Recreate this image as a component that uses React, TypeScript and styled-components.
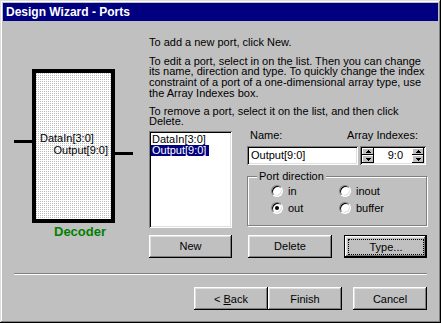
import React from "react";
import styled, { createGlobalStyle, css } from "styled-components";

const GlobalStyle = createGlobalStyle`
  html, body {
    margin: 0;
    padding: 0;
    background: #c0c0c0;
  }
  body {
    font-family: "Liberation Sans", Arial, sans-serif;
    font-size: 11px;
    color: #000;
  }
`;

const raised = css`
  box-shadow: inset -1px -1px #000, inset 1px 1px #fff, inset -2px -2px #808080,
    inset 2px 2px #dfdfdf;
`;

const sunken = css`
  box-shadow: inset 1px 1px #808080, inset -1px -1px #fff, inset 2px 2px #000,
    inset -2px -2px #dfdfdf;
`;

const Window = styled.div`
  width: 441px;
  height: 323px;
  box-sizing: border-box;
  padding: 3px;
  background: #c0c0c0;
  box-shadow: inset -1px -1px #000, inset 1px 1px #dfdfdf, inset -2px -2px #808080,
    inset 2px 2px #fff;
  display: flex;
  flex-direction: column;
`;

const TitleBar = styled.div`
  height: 18px;
  flex-shrink: 0;
  background: #000080;
  color: #fff;
  font-weight: bold;
  font-size: 12px;
  display: flex;
  align-items: center;
  padding-left: 3px;
`;

const Main = styled.div`
  flex: 1;
  display: flex;
  padding: 16px 0 0 11px;
`;

const LeftPanel = styled.div`
  width: 135px;
  padding-top: 32px;
  display: flex;
  flex-direction: column;
`;

const Diagram = styled.div`
  display: flex;
  align-items: flex-start;
`;

const Pin = styled.div<{ $top: number }>`
  width: 18px;
  height: 3px;
  background: #000;
  margin-top: ${(p) => p.$top}px;
`;

// stippled fill: one grey dot in every 2x2 tile
const Block = styled.div`
  width: 83px;
  height: 154px;
  box-sizing: border-box;
  border: 4px solid #000;
  padding: 59px 3px 0 4px;
  line-height: 12px;
  background-color: #fff;
  background-image: linear-gradient(90deg, transparent 1px, #fff 1px),
    linear-gradient(#bcbcbc 1px, transparent 1px);
  background-size: 2px 2px;
  display: flex;
  flex-direction: column;
`;

const PortName = styled.span<{ $right?: boolean }>`
  white-space: nowrap;
  align-self: ${(p) => (p.$right ? "flex-end" : "flex-start")};
`;

const BlockTitle = styled.div`
  margin: 1px 0 0 40px;
  font-size: 13px;
  line-height: 15px;
  font-weight: bold;
  color: #008000;
`;

const RightPanel = styled.div`
  width: 278px;
  display: flex;
  flex-direction: column;
`;

const Para = styled.p<{ $gap?: number }>`
  margin: ${(p) => p.$gap ?? 0}px 0 0;
  line-height: 10.7px;
  white-space: nowrap;
`;

const Editor = styled.div`
  margin-top: 4px;
  display: grid;
  grid-template-columns: 83px 180px;
  column-gap: 15px;
  row-gap: 7px;
`;

const ListBox = styled.div`
  height: 97px;
  box-sizing: border-box;
  padding: 3px 2px 2px;
  background: #fff;
  ${sunken};
  display: flex;
  flex-direction: column;
  align-items: flex-start;
`;

const ListItem = styled.div<{ $selected?: boolean }>`
  line-height: 11px;
  padding: 0 3px 0 1px;
  white-space: nowrap;
  ${(p) =>
    p.$selected &&
    css`
      background: #000080;
      color: #fff;
    `}
`;

const Details = styled.div`
  margin-top: -1px;
  display: flex;
  flex-direction: column;
`;

const LabelRow = styled.div`
  display: flex;
  justify-content: space-between;
  line-height: 11px;
  padding: 0 9px 0 3px;
`;

const FieldRow = styled.div`
  margin-top: 5px;
  display: flex;
  gap: 2px;
`;

const TextField = styled.div<{ $w: number }>`
  width: ${(p) => p.$w}px;
  height: 19px;
  box-sizing: border-box;
  background: #fff;
  ${sunken};
  padding: 0 4px;
  display: flex;
  align-items: center;
  white-space: nowrap;
`;

const SpinBox = styled.div`
  width: 66px;
  height: 19px;
  box-sizing: border-box;
  padding: 2px;
  background: #fff;
  ${sunken};
  display: flex;
`;

const SpinButtons = styled.div`
  width: 12px;
  display: flex;
  flex-direction: column;
`;

const SpinHalf = styled.div`
  flex: 1;
  background: #c0c0c0;
  box-shadow: inset -1px -1px #000, inset 1px 1px #fff;
  display: flex;
  align-items: center;
  justify-content: center;
`;

const SpinValue = styled.div`
  flex: 1;
  display: flex;
  align-items: center;
  justify-content: flex-end;
  padding-right: 9px;
`;

const Group = styled.fieldset`
  margin: 6px 0 0;
  padding: 1px 0 8px 0;
  border: 1px solid #808080;
  box-shadow: inset 1px 1px #fff, 1px 1px #fff;
  min-width: 0;
`;

const Legend = styled.legend`
  margin-left: 9px;
  padding: 0 2px;
  line-height: 11px;
  background: #c0c0c0;
`;

const RadioGrid = styled.div`
  padding-left: 23px;
  display: grid;
  grid-template-columns: 68px auto;
  grid-auto-rows: 17px;
`;

const RadioLabel = styled.label`
  display: flex;
  align-items: center;
  gap: 5px;
`;

const RadioDot = styled.span<{ $checked?: boolean }>`
  width: 12px;
  height: 12px;
  box-sizing: border-box;
  border-radius: 50%;
  background: #fff;
  border: 1px solid;
  border-color: #808080 #fff #fff #808080;
  box-shadow: inset 1px 1px #000, inset -1px -1px #dfdfdf;
  display: flex;
  align-items: center;
  justify-content: center;
  &::after {
    content: "";
    width: 4px;
    height: 4px;
    border-radius: 50%;
    background: ${(p) => (p.$checked ? "#000" : "transparent")};
  }
`;

const ButtonRow = styled.div`
  display: flex;
  justify-content: space-between;
`;

const Button = styled.button<{ $w: number; $default?: boolean }>`
  width: ${(p) => p.$w}px;
  height: 23px;
  box-sizing: border-box;
  padding: 0;
  border: 0;
  margin: 0;
  background: #c0c0c0;
  font: 11px "Liberation Sans", Arial, sans-serif;
  color: #000;
  display: flex;
  align-items: center;
  justify-content: center;
  ${raised};
  ${(p) =>
    p.$default &&
    css`
      border: 1px solid #000;
      align-items: stretch;
    `}
`;

const FocusRing = styled.span`
  flex: 1;
  margin: 3px 2px 2px 3px;
  border: 1px dotted #000;
  display: flex;
  align-items: center;
  justify-content: center;
`;

const Separator = styled.div`
  margin: 0 11px;
  border-top: 1px solid #808080;
  border-bottom: 1px solid #fff;
`;

const Footer = styled.div`
  display: flex;
  justify-content: flex-end;
  padding: 12px 11px 10px;
`;

const Arrow = ({ up }: { up?: boolean }) => (
  <svg width="5" height="3" viewBox="0 0 5 3" shapeRendering="crispEdges">
    <polygon points={up ? "0,3 5,3 2.5,0" : "0,0 5,0 2.5,3"} fill="#000" />
  </svg>
);

const Spinner = () => (
  <SpinButtons>
    <SpinHalf>
      <Arrow up />
    </SpinHalf>
    <SpinHalf>
      <Arrow />
    </SpinHalf>
  </SpinButtons>
);

const directions = [
  { label: "in", checked: false },
  { label: "inout", checked: false },
  { label: "out", checked: true },
  { label: "buffer", checked: false },
];

export default function App() {
  return (
    <>
      <GlobalStyle />
      <Window>
        <TitleBar>Design Wizard - Ports</TitleBar>
        <Main>
          <LeftPanel>
            <Diagram>
              <Pin $top={71} />
              <Block>
                <PortName>DataIn[3:0]</PortName>
                <PortName $right>Output[9:0]</PortName>
              </Block>
              <Pin $top={83} />
            </Diagram>
            <BlockTitle>Decoder</BlockTitle>
          </LeftPanel>
          <RightPanel>
            <Para>To add a new port, click New.</Para>
            <Para $gap={8}>
              To edit a port, select in on the list. Then you can change
              <br />
              its name, direction and type. To quickly change the index
              <br />
              constraint of a port of a one-dimensional array type, use
              <br />
              the Array Indexes box.
            </Para>
            <Para $gap={7}>
              To remove a port, select it on the list, and then click
              <br />
              Delete.
            </Para>
            <Editor>
              <ListBox>
                <ListItem>DataIn[3:0]</ListItem>
                <ListItem $selected>Output[9:0]</ListItem>
              </ListBox>
              <Details>
                <LabelRow>
                  <span>Name:</span>
                  <span>Array Indexes:</span>
                </LabelRow>
                <FieldRow>
                  <TextField $w={111}>Output[9:0]</TextField>
                  <SpinBox>
                    <Spinner />
                    <SpinValue>9:0</SpinValue>
                    <Spinner />
                  </SpinBox>
                </FieldRow>
                <Group>
                  <Legend>Port direction</Legend>
                  <RadioGrid>
                    {directions.map((d) => (
                      <RadioLabel key={d.label}>
                        <RadioDot $checked={d.checked} />
                        {d.label}
                      </RadioLabel>
                    ))}
                  </RadioGrid>
                </Group>
              </Details>
              <Button $w={83}>New</Button>
              <ButtonRow>
                <Button $w={84} style={{ marginLeft: 1 }}>
                  Delete
                </Button>
                <Button $w={83} $default>
                  <FocusRing>Type...</FocusRing>
                </Button>
              </ButtonRow>
            </Editor>
          </RightPanel>
        </Main>
        <Separator />
        <Footer>
          <Button $w={74}>
            &lt;&nbsp;<u>B</u>ack
          </Button>
          <Button $w={74}>Finish</Button>
          <Button $w={74} style={{ marginLeft: 11 }}>
            Cancel
          </Button>
        </Footer>
      </Window>
    </>
  );
}
